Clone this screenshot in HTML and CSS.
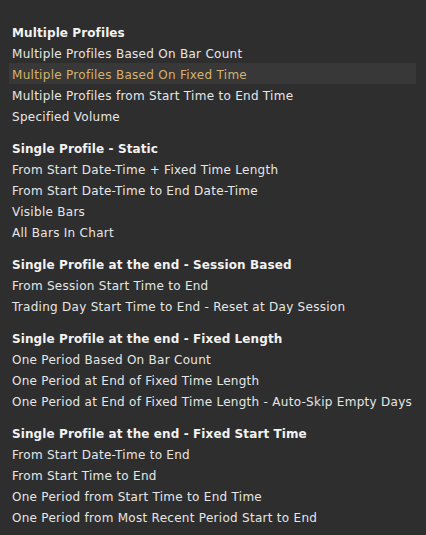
FILE: index.html
```html
<!DOCTYPE html>
<html>
<head>
<meta charset="utf-8">
<link rel="stylesheet" href="styles.css">
</head>
<body>
<div class="menu">
  <div class="group">
    <div class="head">Multiple Profiles</div>
    <div class="item">Multiple Profiles Based On Bar Count</div>
    <div class="item active">Multiple Profiles Based On Fixed Time</div>
    <div class="item">Multiple Profiles from Start Time to End Time</div>
    <div class="item">Specified Volume</div>
  </div>
  <div class="group">
    <div class="head">Single Profile - Static</div>
    <div class="item">From Start Date-Time + Fixed Time Length</div>
    <div class="item">From Start Date-Time to End Date-Time</div>
    <div class="item">Visible Bars</div>
    <div class="item">All Bars In Chart</div>
  </div>
  <div class="group">
    <div class="head">Single Profile at the end - Session Based</div>
    <div class="item">From Session Start Time to End</div>
    <div class="item">Trading Day Start Time to End - Reset at Day Session</div>
  </div>
  <div class="group">
    <div class="head">Single Profile at the end - Fixed Length</div>
    <div class="item">One Period Based On Bar Count</div>
    <div class="item">One Period at End of Fixed Time Length</div>
    <div class="item">One Period at End of Fixed Time Length - Auto-Skip Empty Days</div>
  </div>
  <div class="group">
    <div class="head">Single Profile at the end - Fixed Start Time</div>
    <div class="item">From Start Date-Time to End</div>
    <div class="item">From Start Time to End</div>
    <div class="item">One Period from Start Time to End Time</div>
    <div class="item">One Period from Most Recent Period Start to End</div>
  </div>
</div>
</body>
</html>
```
FILE: styles.css
```css
html, body {
  margin: 0;
  padding: 0;
  background: #2e2e2e;
  width: 426px;
  height: 535px;
  overflow: hidden;
}
.menu {
  display: flex;
  flex-direction: column;
  gap: 11px;
  padding: 21px 10px 0 9px;
  font-family: "DejaVu Sans", Verdana, sans-serif;
  font-size: 12px;
  color: #e6e6e6;
}
.group {
  display: flex;
  flex-direction: column;
}
.head, .item {
  height: 19px;
  line-height: 20px;
  padding: 2px 0 0 3px;
  white-space: nowrap;
}
.item {
  letter-spacing: 0.28px;
}
.head {
  font-weight: bold;
  color: #f2f2f2;
  letter-spacing: 0.1px;
}
.item.active {
  background: #383838;
  color: #d6b26c;
}
```
